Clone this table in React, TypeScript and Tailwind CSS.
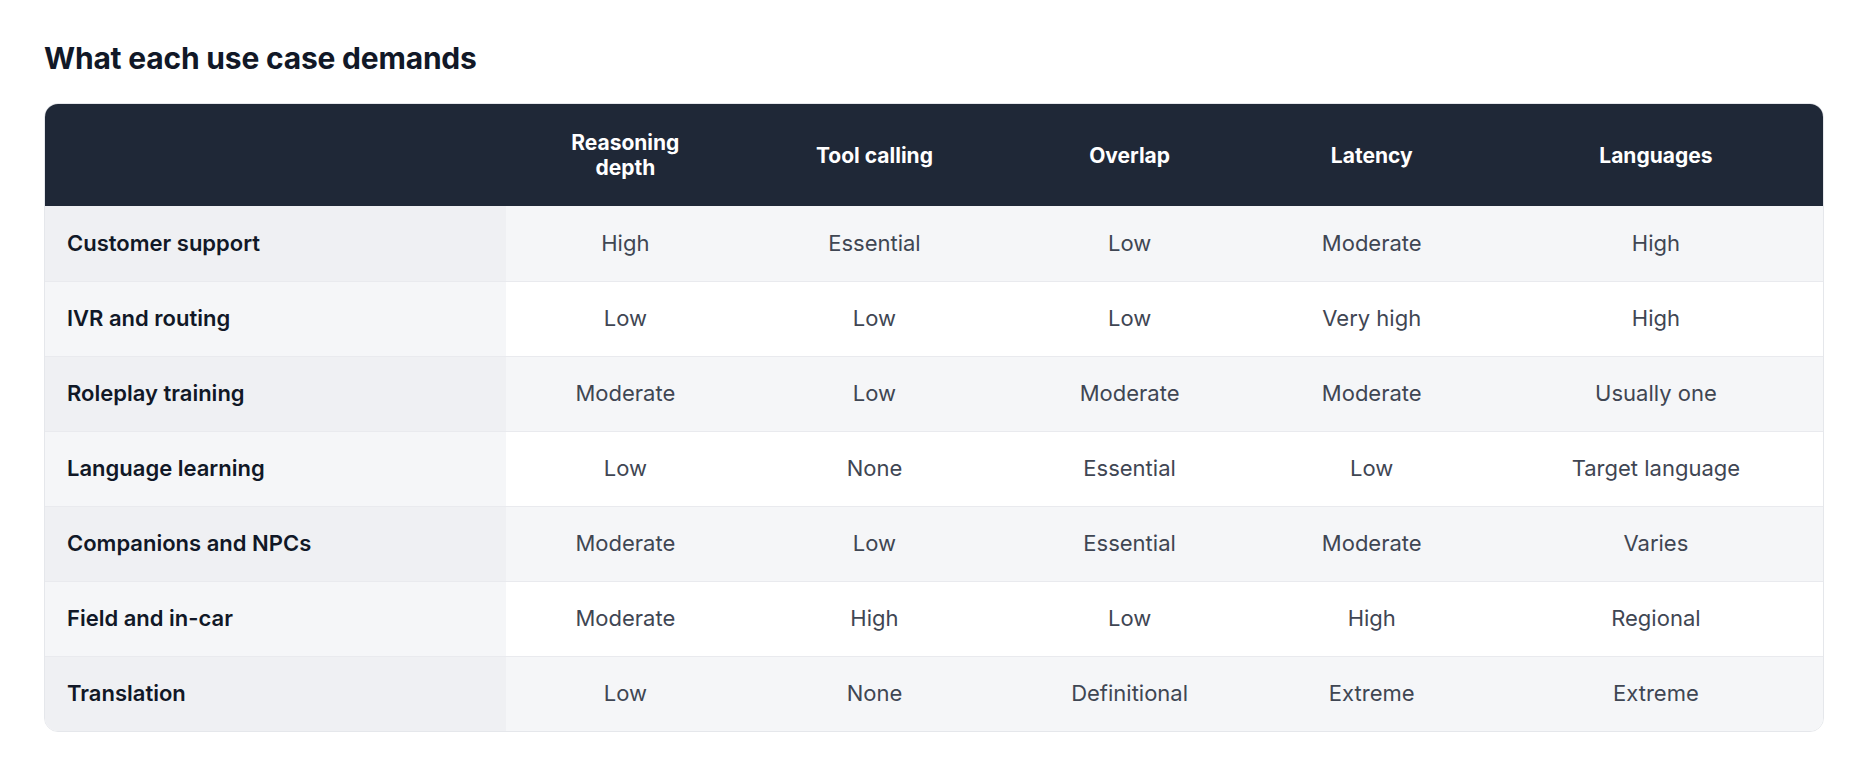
const headers = ['Reasoning depth', 'Tool calling', 'Overlap', 'Latency', 'Languages'];

const rows = [
  { label: 'Customer support', values: ['High', 'Essential', 'Low', 'Moderate', 'High'] },
  { label: 'IVR and routing', values: ['Low', 'Low', 'Low', 'Very high', 'High'] },
  { label: 'Roleplay training', values: ['Moderate', 'Low', 'Moderate', 'Moderate', 'Usually one'] },
  { label: 'Language learning', values: ['Low', 'None', 'Essential', 'Low', 'Target language'] },
  { label: 'Companions and NPCs', values: ['Moderate', 'Low', 'Essential', 'Moderate', 'Varies'] },
  { label: 'Field and in-car', values: ['Moderate', 'High', 'Low', 'High', 'Regional'] },
  { label: 'Translation', values: ['Low', 'None', 'Definitional', 'Extreme', 'Extreme'] },
];

const colWidths = ['w-[238px]', 'w-[260px]', 'w-[250px]', 'w-[234px]', 'w-[334px]'];

export default function App() {
  return (
    <div className="min-h-screen bg-white px-[44px] pt-[40px] font-['Inter','Noto_Sans',sans-serif]">
      {/* Title */}
      <h2 className="text-[30px] leading-[36px] font-bold text-[#111827] tracking-[-0.2px]">
        What each use case demands
      </h2>

      {/* Table */}
      <div className="mt-[27px] rounded-[14px] border border-[#e5e7eb] overflow-hidden">
        <table className="w-full table-fixed border-collapse">
          <thead className="bg-[#1f2837]">
            <tr className="h-[102px]">
              <th className="w-[461px]"></th>
              {headers.map((h, i) => (
                <th
                  key={h}
                  className={`${colWidths[i]} px-4 text-center text-[21px] leading-[25px] font-bold text-white`}
                >
                  {h === 'Reasoning depth' ? (
                    <>
                      Reasoning
                      <br />
                      depth
                    </>
                  ) : (
                    h
                  )}
                </th>
              ))}
            </tr>
          </thead>
          <tbody>
            {rows.map((row, r) => (
              <tr
                key={row.label}
                className={`h-[75px] ${r > 0 ? 'border-t border-[#e9eaee]' : ''} ${
                  r % 2 === 0 ? 'bg-[#f5f6f8]' : 'bg-white'
                }`}
              >
                <td
                  className={`pl-[22px] text-[22px] font-semibold text-[#111827] ${
                    r % 2 === 0 ? 'bg-[#eff0f3]' : 'bg-[#f5f6f8]'
                  }`}
                >
                  {row.label}
                </td>
                {row.values.map((v, i) => (
                  <td key={i} className="px-4 text-center text-[22px] text-[#3f4653]">
                    {v}
                  </td>
                ))}
              </tr>
            ))}
          </tbody>
        </table>
      </div>
    </div>
  );
}
